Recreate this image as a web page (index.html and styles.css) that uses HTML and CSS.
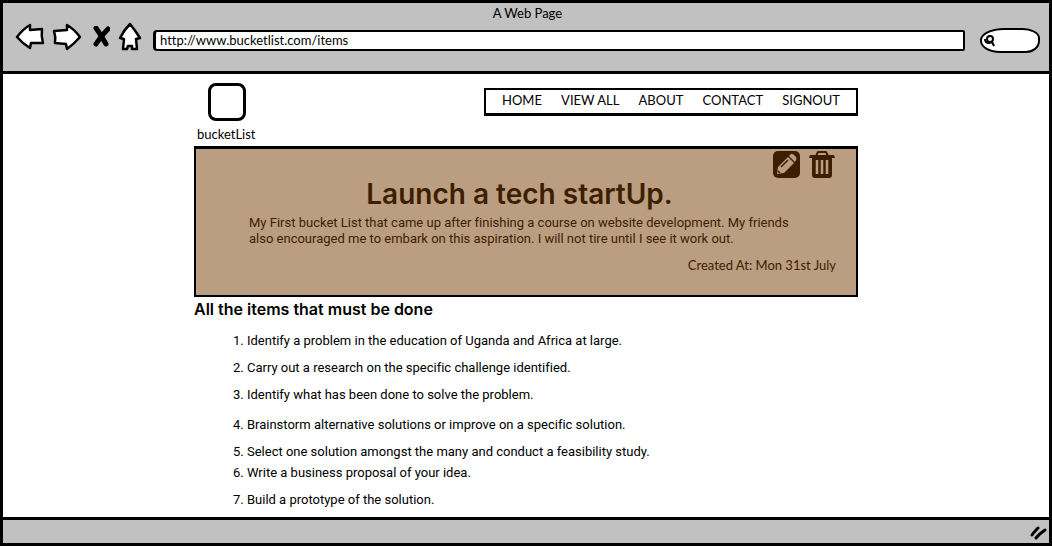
FILE: index.html
```html
<!DOCTYPE html>
<html lang="en">
<head>
<meta charset="utf-8">
<meta name="viewport" content="width=device-width, initial-scale=1">
<title>A Web Page</title>
<link rel="stylesheet" href="styles.css">
</head>
<body>
<div class="window">
  <header class="chrome">
    <div class="chrome-title">A Web Page</div>
    <div class="toolbar">
      <button class="tool back" aria-label="Back"><svg width="30" height="28" viewBox="0 0 30 28"><path class="ink" d="M2 14 Q8 6 15 2 L15 7 L27 6 Q26 13 28 20 L16 20 L15 25 Q8 21 2 14Z"/></svg></button>
      <button class="tool forward" aria-label="Forward"><svg width="30" height="28" viewBox="0 0 30 28"><path class="ink" d="M28 14 Q22 6 15 2 L15 7 L2 8 Q4 14 3 20 L14 21 L15 26 Q22 21 28 14Z"/></svg></button>
      <button class="tool stop" aria-label="Stop"><svg width="18" height="22" viewBox="0 0 18 22"><path class="cross" d="M4 2 Q9 9 14 18 M16 3 Q9 10 4 18"/></svg></button>
      <button class="tool home" aria-label="Home"><svg width="24" height="30" viewBox="0 0 24 30"><path class="ink" d="M12 2 Q17 8 22 16 L18 17 L19 27 L14 27 L14 24 L10 24 L9 27 L5 27 L6 17 L2 16 Q6 8 12 2Z"/></svg></button>
      <input class="address" type="text" aria-label="Address" value="http://www.bucketlist.com/items">
      <div class="search">
        <svg class="search-icon" width="12" height="13" viewBox="0 0 12 13" aria-hidden="true"><circle cx="6" cy="5" r="3"/><path d="M1 5 Q1 9 5 9 L8 8 L10 12"/></svg>
        <input class="search-input" type="search" aria-label="Search">
      </div>
    </div>
  </header>

  <main class="page">
    <div class="masthead">
      <div class="brand">
        <div class="logo"></div>
        <div class="brand-name">bucketList</div>
      </div>
      <nav class="menu">
        <a href="#home">HOME</a>
        <a href="#all">VIEW ALL</a>
        <a href="#about">ABOUT</a>
        <a href="#contact">CONTACT</a>
        <a href="#signout">SIGNOUT</a>
      </nav>
    </div>

    <section class="card">
      <div class="actions">
        <button class="tool" aria-label="Edit"><svg width="28" height="28" viewBox="0 0 28 28"><rect x="1" y="1" width="27" height="27" rx="5" fill="#3d1f00"/><g fill="#bb9d81"><path d="M5 24 L6 17 L16 7 L22 13 L12 23Z"/><path d="M17 6 L19 4 Q20 3 22 5 L24 7 Q25 9 24 10 L23 12Z"/></g><path d="M9 17 L16 10 M6 21 L8 23" stroke="#3d1f00" stroke-width="1.5"/></svg></button>
        <button class="tool" aria-label="Delete"><svg width="26" height="28" viewBox="0 0 26 28"><path d="M7 6 L9 2 H17 L19 6" fill="none" stroke="#3d1f00" stroke-width="2" stroke-linejoin="round"/><path d="M1 5 H25 L26 8 H23 V25 Q23 28 20 28 H6 Q3 28 3 25 V8 H0Z" fill="#3d1f00"/><path d="M8 10 V24 M13 10 V24 M18 10 V24" stroke="#bb9d81" stroke-width="2.5"/></svg></button>
      </div>
      <h1 class="card-title">Launch a tech startUp.</h1>
      <p class="summary">My First bucket List that came up after finishing a course on website development. My friends<br>also encouraged me to embark on this aspiration. I will not tire until I see it work out.</p>
      <p class="created">Created At: Mon 31st July</p>
    </section>

    <h2 class="list-title">All the items that must be done</h2>
    <ol class="items">
      <li>1. Identify a problem in the education of Uganda and Africa at large.</li>
      <li>2. Carry out a research on the specific challenge identified.</li>
      <li class="roomy">3. Identify what has been done to solve the problem.</li>
      <li>4. Brainstorm alternative solutions or improve on a specific solution.</li>
      <li class="tight">5. Select one solution amongst the many and conduct a feasibility study.</li>
      <li>6. Write a business proposal of your idea.</li>
      <li>7. Build a prototype of the solution.</li>
    </ol>
  </main>

  <footer class="status"><svg width="18" height="16" viewBox="0 0 18 16" aria-hidden="true"><path d="M2 11 Q4 8 8 4 M6 14 Q9 10 15 6" /></svg></footer>
</div>
</body>
</html>
```
FILE: styles.css
```css
* { box-sizing: border-box; }

body {
  margin: 0;
  font: 13px/16px Lato, "Open Sans", sans-serif;
  font-variant-ligatures: none;
  color: #000;
  background: #fff;
}

.window {
  display: flex;
  flex-direction: column;
  min-height: 100vh;
  border: 3px solid #000;
}

.chrome {
  padding: 2px 9px 18px 12px;
  background: #c1c1c1;
  border-bottom: 3px solid #000;
}

.chrome-title { text-align: center; line-height: 16px; }

.toolbar {
  display: flex;
  align-items: center;
  height: 32px;
}

.tool {
  display: block;
  padding: 0;
  border: 0;
  background: none;
  cursor: pointer;
}

.tool svg { display: block; }
.back { margin-right: 7px; }
.forward { margin-right: 10px; }
.stop { margin-right: 8px; }
.home { margin-right: 11px; }

.ink {
  fill: #fff;
  stroke: #000;
  stroke-width: 2.5;
  stroke-linejoin: round;
}

.cross {
  fill: none;
  stroke: #000;
  stroke-width: 5;
  stroke-linecap: round;
}

.address {
  flex: 1;
  min-width: 0;
  height: 21px;
  margin-top: 6px;
  padding: 0 4px;
  border: 2px solid #000;
  border-left-width: 3px;
  border-radius: 4px 2px 2px 4px;
  background: #fff;
  font: inherit;
  color: #000;
}

.search {
  display: flex;
  align-items: center;
  width: 60px;
  height: 25px;
  margin: 6px 0 0 15px;
  padding-left: 2px;
  border: 2px solid #000;
  border-radius: 24px 18px 14px 20px / 12px 10px 12px 12px;
  background: #fff;
}

.search-icon {
  flex: none;
  fill: none;
  stroke: #000;
  stroke-width: 2;
}

.search-input {
  flex: 1;
  min-width: 0;
  padding: 0;
  border: 0;
  background: none;
  outline: 0;
}

.page {
  flex: 1;
  width: 100%;
  max-width: 664px;
  margin: 0 auto;
  padding: 9px 0;
}

.masthead {
  display: flex;
  align-items: flex-start;
  justify-content: space-between;
}

.brand-name { margin: 5px 0 4px 3px; }

.logo {
  width: 38px;
  height: 38px;
  margin-left: 14px;
  border: 3px solid #000;
  border-radius: 8px;
}

.menu {
  display: flex;
  justify-content: space-between;
  width: 374px;
  margin-top: 5px;
  padding: 2px 16px 5px;
  border: 2px solid #000;
  border-bottom-width: 3px;
}

.menu a { color: #000; text-decoration: none; }

.card {
  padding: 1px 20px 22px 53px;
  border: 2px solid #000;
  border-top-width: 3px;
  background: #bb9d81;
  color: #3d1f00;
}

.actions {
  display: flex;
  justify-content: flex-end;
  gap: 9px;
  margin-right: 1px;
}

.card-title {
  margin: 0 46px 5px 0;
  text-align: center;
  font-family: Inter, sans-serif;
  font-size: 28px;
  font-weight: 600;
  line-height: 32px;
}

.summary { margin: 0 0 10px; }
.created { margin: 0; text-align: right; }

.summary,
.items { font-family: Roboto, Lato, sans-serif; }

.list-title {
  margin: 3px 0 15px;
  font-family: Inter, sans-serif;
  font-size: 16px;
  font-weight: 600;
  line-height: 18px;
}

.items {
  margin: 0;
  padding: 0 0 0 39px;
  list-style: none;
}

.items li { margin-bottom: 11px; }
.items .roomy { margin-bottom: 14px; }
.items .tight { margin-bottom: 5px; }
.items li:last-child { margin-bottom: 0; }

.status {
  display: flex;
  align-items: center;
  justify-content: flex-end;
  height: 26px;
  padding-right: 1px;
  border-top: 3px solid #000;
  background: #c1c1c1;
}

.status path {
  fill: none;
  stroke: #000;
  stroke-width: 3;
  stroke-linecap: round;
}
```
